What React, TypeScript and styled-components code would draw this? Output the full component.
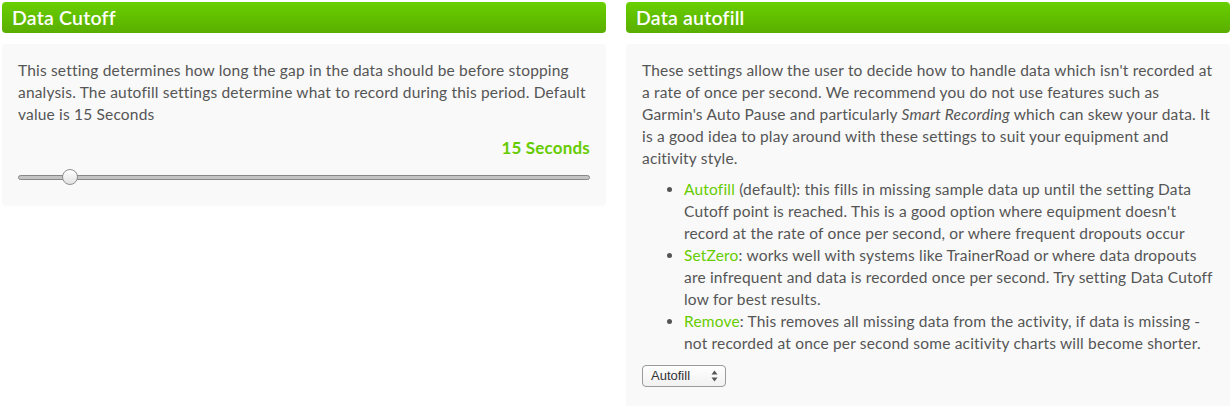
import React from "react";
import styled, { createGlobalStyle } from "styled-components";

const Global = createGlobalStyle`
  html, body { margin: 0; padding: 0; background: #ffffff; }
  body { font-family: Lato, "Open Sans", "Liberation Sans", sans-serif; }
  * { box-sizing: border-box; }
`;

const Page = styled.div`
  display: grid;
  grid-template-columns: 604px 604px;
  column-gap: 20px;
  padding: 2px 2px 0 2px;
  align-items: start;
`;

const Column = styled.section`
  display: flex;
  flex-direction: column;
  gap: 11px;
`;

const Header = styled.h2`
  margin: 0;
  height: 31px;
  padding: 0 10px;
  display: flex;
  align-items: center;
  border-radius: 4px;
  background: linear-gradient(#68cf00, #5aae00);
  color: #ffffff;
  font-size: 19.5px;
  font-weight: 600;
  letter-spacing: 0.2px;
`;

const Panel = styled.div<{ $bottom?: number }>`
  background: #f9f9f9;
  border-radius: 4px;
  padding: 15px 16px ${(p) => p.$bottom ?? 16}px 16px;
  color: #555555;
  font-size: 15.5px;
  letter-spacing: 0.18px;
  line-height: 22px;
`;

const Para = styled.p`
  margin: 0;
`;

const Value = styled.div`
  text-align: right;
  color: #66cc00;
  font-weight: 700;
  font-size: 17px;
  margin-top: 12px;
  line-height: 22px;
`;

const SliderWrap = styled.div`
  position: relative;
  height: 16px;
  margin-top: 10px;
  display: flex;
  align-items: center;
`;

const Track = styled.div`
  width: 100%;
  height: 5px;
  border-radius: 3px;
  background: #c4c4c4;
  border: 1px solid #888888;
`;

const Thumb = styled.div`
  position: absolute;
  top: 0;
  width: 16px;
  height: 16px;
  border-radius: 50%;
  border: 1px solid #8f8f8f;
  background: linear-gradient(#ffffff, #e2e2e2);
`;

const List = styled.ul`
  margin: 9px 0 0 0;
  padding-left: 42px;
  list-style: disc;
  li::marker { color: #555555; }
`;

const Item = styled.li`
  margin: 0;
`;

const Term = styled.span`
  color: #66cc00;
`;

const Select = styled.div`
  margin-top: 11px;
  width: 84px;
  height: 22px;
  border: 1px solid #9a9a9a;
  border-radius: 4px;
  background: linear-gradient(#ffffff, #f1f1f1);
  display: flex;
  align-items: center;
  justify-content: space-between;
  padding: 0 7px 0 8px;
  font-size: 13px;
  letter-spacing: 0;
  color: #333333;
  font-family: "Liberation Sans", Arial, sans-serif;
`;

const Arrows = styled.svg`
  width: 7px;
  height: 12px;
`;

export default function App() {
  const min = 5;
  const max = 115;
  const value = 15;
  const pct = (value - min) / (max - min);
  return (
    <>
      <Global />
      <Page>
        <Column>
          <Header>Data Cutoff</Header>
          <Panel $bottom={21}>
            <Para>
              This setting determines how long the gap in the data should be before stopping
              analysis. The autofill settings determine what to record during this period. Default
              value is 15 Seconds
            </Para>
            <Value>15 Seconds</Value>
            <SliderWrap>
              <Track />
              <Thumb style={{ left: `calc(${pct * 100}% - 8px)` }} />
            </SliderWrap>
          </Panel>
        </Column>
        <Column>
          <Header>Data autofill</Header>
          <Panel $bottom={20}>
            <Para>
              These settings allow the user to decide how to handle data which isn't recorded at a
              rate of once per second. We recommend you do not use features such as Garmin's Auto
              Pause and particularly <em>Smart Recording</em> which can skew your data. It is a good
              idea to play around with these settings to suit your equipment and acitivity style.
            </Para>
            <List>
              <Item>
                <Term>Autofill</Term> (default): this fills in missing sample data up until the
                setting Data Cutoff point is reached. This is a good option where equipment doesn't
                record at the rate of once per second, or where frequent dropouts occur
              </Item>
              <Item>
                <Term>SetZero</Term>: works well with systems like TrainerRoad or where data dropouts
                are infrequent and data is recorded once per second. Try setting Data Cutoff low for
                best results.
              </Item>
              <Item>
                <Term>Remove</Term>: This removes all missing data from the activity, if data is
                missing - not recorded at once per second some acitivity charts will become shorter.
              </Item>
            </List>
            <Select>
              <span>Autofill</span>
              <Arrows viewBox="0 0 7 12">
                <path d="M3.5 0.5 L6.5 4.5 L0.5 4.5 Z" fill="#555" />
                <path d="M3.5 11.5 L6.5 7.5 L0.5 7.5 Z" fill="#555" />
              </Arrows>
            </Select>
          </Panel>
        </Column>
      </Page>
    </>
  );
}
